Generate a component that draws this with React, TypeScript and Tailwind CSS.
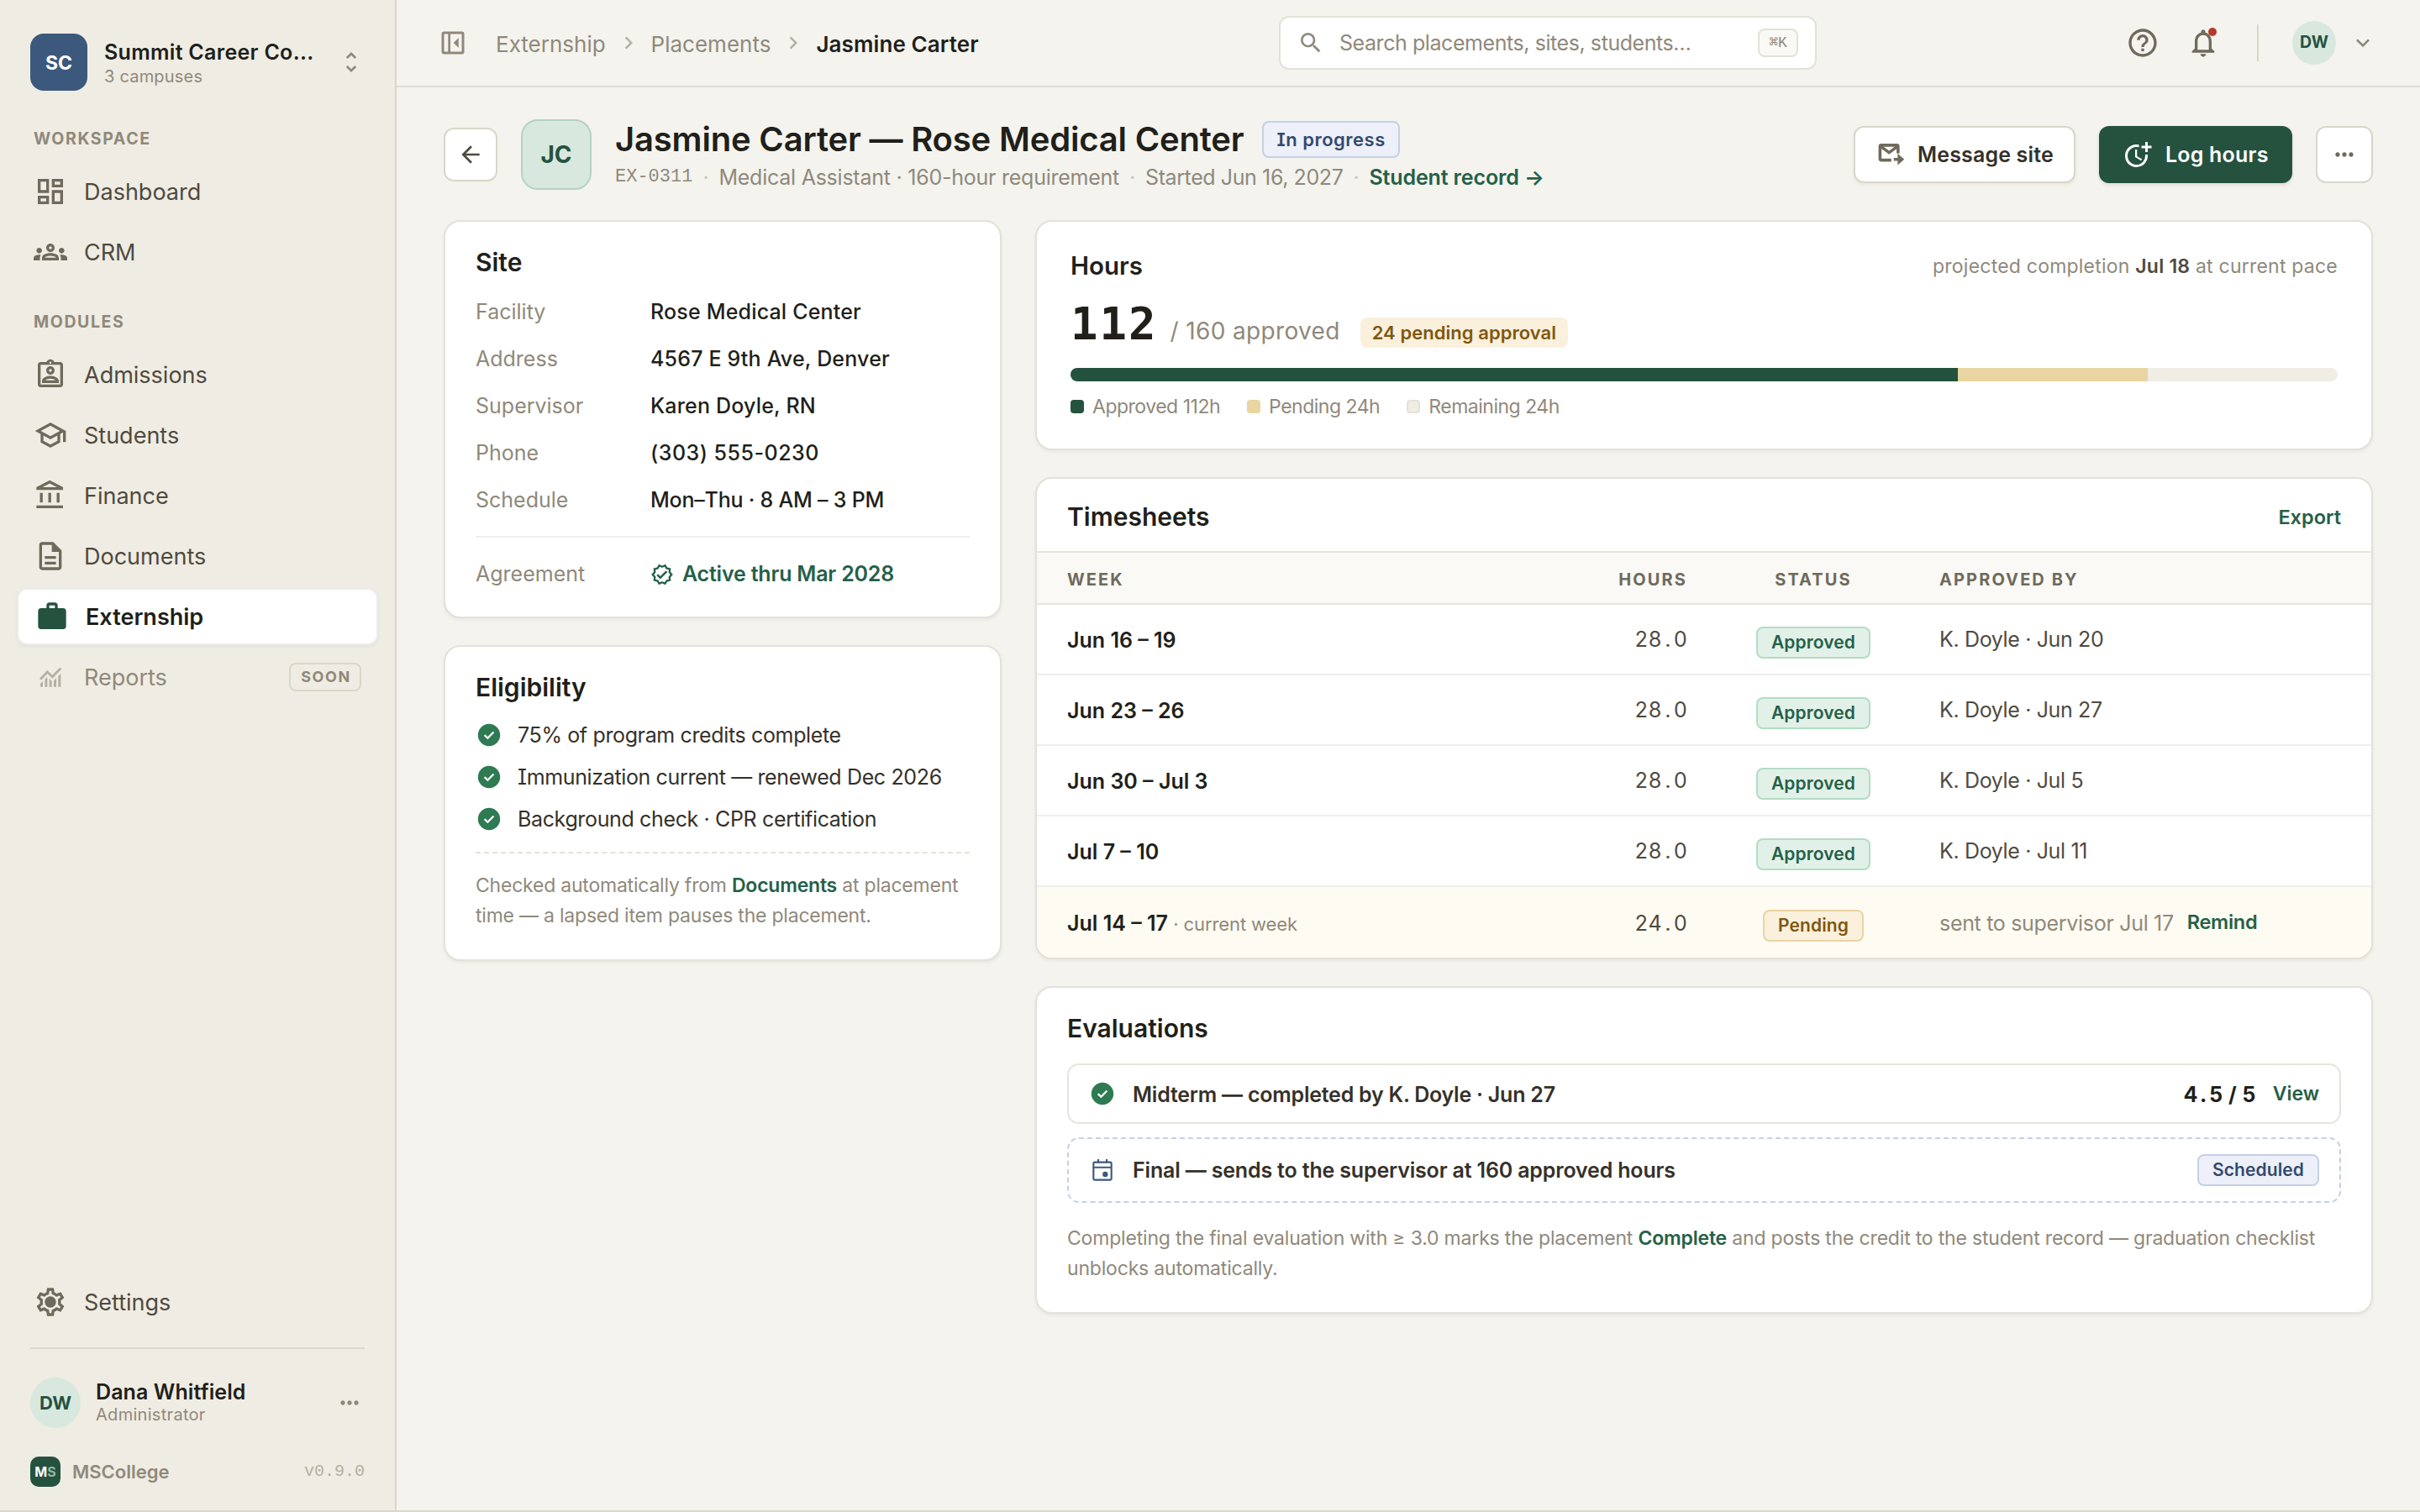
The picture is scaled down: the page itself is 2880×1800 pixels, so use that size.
import React from 'react';
import {
  MdOutlineDashboard,
  MdOutlineGroups,
  MdOutlineAssignmentInd,
  MdOutlineSchool,
  MdOutlineAccountBalance,
  MdOutlineDescription,
  MdWork,
  MdOutlineSettings,
  MdUnfoldMore,
  MdMoreHoriz,
  MdChevronRight,
  MdExpandMore,
  MdSearch,
  MdHelpOutline,
  MdNotificationsNone,
  MdArrowBack,
  MdMoreTime,
  MdOutlineVerified,
} from 'react-icons/md';

const MONO = "font-['Liberation_Mono',monospace]";

/* ICONS */
const CheckCircle = () => (
  <svg viewBox="0 0 24 24" className="size-8 shrink-0">
    <circle cx="12" cy="12" r="9.9" fill="#2e7a52" />
    <path d="M8 12.1l2.8 2.7 5.3-5.4" fill="none" stroke="#fff" strokeWidth="1.7" />
  </svg>
);

const ReportsIcon = () => (
  <svg viewBox="0 0 24 24" className="size-10" fill="currentColor">
    <path d="M4.8 13.6L9.8 8.4l3.6 3.5 6-6.2" fill="none" stroke="currentColor" strokeWidth="1.7" />
    <path d="M4.8 19v-2.2l1.8-1.9V19zM8 19v-5.4l1.8-1.7V19zM11.2 19v-6l1.8 1.8V19zM14.4 19v-4.4l1.8-1.8V19zM17.6 19v-7.6l1.8-1.8V19z" />
  </svg>
);

const PanelIcon = () => (
  <svg viewBox="0 0 24 24" className="size-9">
    <rect x="4" y="4" width="16" height="16" rx="1" fill="none" stroke="currentColor" strokeWidth="2" />
    <path d="M9.1 4v16" stroke="currentColor" strokeWidth="1.8" />
    <path d="M16.5 8v8l-4-4z" fill="currentColor" />
  </svg>
);

const MailOutIcon = () => (
  <svg viewBox="0 0 24 24" className="size-9" fill="none" stroke="currentColor" strokeWidth="2.4">
    <path d="M12.5 16.4H4.6a1 1 0 0 1-1-1V5.6a1 1 0 0 1 1-1h12.3a1 1 0 0 1 1 1v5.4" />
    <path d="M4 5.4l6.8 5 6.8-5" />
    <path d="M14.5 15.8h4" />
    <path d="M17.6 11.2l5.2 4.6-5.2 4.6z" fill="currentColor" stroke="none" />
  </svg>
);

const CalendarIcon = () => (
  <svg viewBox="0 0 24 24" className="size-8 shrink-0" fill="none" stroke="#3c587c" strokeWidth="1.6">
    <rect x="4" y="5" width="16" height="15.7" rx="1" />
    <path d="M4 9.6h16M8.2 2.3V5M15.8 2.3V5" />
    <circle cx="14.5" cy="15.8" r="2.4" fill="#3c587c" stroke="none" />
  </svg>
);

const SettingsIcon = () => (
  <span className="relative flex">
    <MdOutlineSettings className="size-10" />
    <span className="absolute left-3.5 top-3.5 size-3 rounded-full bg-current" />
  </span>
);

/* Tabular figure, the decimal point takes a full digit cell */
const Figure = ({ value }: { value: string }) => {
  const [whole, rest] = value.split('.');
  return (
    <span className="[font-feature-settings:'cv08','tnum']">
      {whole}
      <span className="px-[3.7px]">.</span>
      {rest}
    </span>
  );
};

/* SIDEBAR */
const NavItem = ({ icon, label, active, soon }: { icon: React.ReactNode; label: string; active?: boolean; soon?: boolean }) => (
  <div
    className={
      active
        ? 'flex h-[68px] items-center gap-5 rounded-xl border-2 border-[#ececea] bg-white pl-5 pr-5 font-semibold text-[#211f1a] shadow-[0_2px_4px_rgba(33,31,26,0.05)]'
        : 'flex h-[68px] items-center gap-5 pl-5 pr-5 ' + (soon ? 'text-[#8f897b]' : 'text-[#4f4a3f]')
    }
  >
    <span className={active ? 'text-[#25523f]' : soon ? 'text-[#b5b0a3]' : 'text-[#6f6a5c]'}>{icon}</span>
    <span className="text-[27px] leading-none">{label}</span>
    {soon && (
      <span className="ml-auto flex h-[34px] w-[86px] items-center justify-center rounded-lg border-2 border-[#d9d7c9] pl-0.5 text-[18px] font-bold leading-none tracking-[1.6px]">
        SOON
      </span>
    )}
  </div>
);

const Sidebar = () => (
  <aside className="flex w-[472px] shrink-0 flex-col border-r-2 border-[#d9d7c9] bg-[#efece3] pt-10 pb-7">
    <div className="flex h-[68px] items-center pl-9 pr-9">
      <div className="flex size-[68px] items-center justify-center rounded-2xl bg-[#3c587c] pt-[3px] text-[23px] font-bold text-white">SC</div>
      <div className="ml-5 flex flex-col pt-[3px]">
        <span className="text-[25px] font-semibold leading-[30px] tracking-[0.3px] text-[#211f1a]">Summit Career Co...</span>
        <span className="text-[20px] leading-7 tracking-[0.2px] text-[#8f897b]">3 campuses</span>
      </div>
      <MdUnfoldMore className="ml-auto size-8 text-[#8f897b]" />
    </div>

    <div className="mt-[45px] pl-10 text-[19.5px] font-bold leading-6 tracking-[1.6px] text-[#8f897b]">WORKSPACE</div>
    <nav className="mt-[17px] flex flex-col gap-1 px-5">
      <NavItem icon={<MdOutlineDashboard className="size-10" />} label="Dashboard" />
      <NavItem icon={<MdOutlineGroups className="size-10" />} label="CRM" />
    </nav>

    <div className="mt-[37px] pl-10 text-[19.5px] font-bold leading-6 tracking-[1.6px] text-[#8f897b]">MODULES</div>
    <nav className="mt-[17px] flex flex-col gap-1 px-5">
      <NavItem icon={<MdOutlineAssignmentInd className="size-10" />} label="Admissions" />
      <NavItem icon={<MdOutlineSchool className="size-10" />} label="Students" />
      <NavItem icon={<MdOutlineAccountBalance className="size-10" />} label="Finance" />
      <NavItem icon={<MdOutlineDescription className="size-10" />} label="Documents" />
      <NavItem icon={<MdWork className="size-10" />} label="Externship" active />
      <NavItem icon={<ReportsIcon />} label="Reports" soon />
    </nav>

    <div className="mt-auto px-5">
      <NavItem icon={<SettingsIcon />} label="Settings" />
    </div>
    <div className="mx-9 mt-5 border-t-2 border-[#dbd8cf]" />
    <div className="mx-9 mt-[34px] flex h-[60px] items-center">
      <div className="flex size-[60px] items-center justify-center rounded-full bg-[#d8e8de] text-[22px] font-bold text-[#25523f]">DW</div>
      <div className="ml-[18px] flex flex-col">
        <span className="text-[25px] font-semibold leading-[27px] tracking-[0.1px] text-[#211f1a]">Dana Whitfield</span>
        <span className="text-[20px] leading-[26px] tracking-[0.3px] text-[#8f897b]">Administrator</span>
      </div>
      <MdMoreHoriz className="ml-auto mr-0.5 size-8 text-[#8f897b]" />
    </div>
    <div className="mx-9 mt-[34px] flex h-9 items-center">
      <div className="flex size-9 items-center justify-center rounded-[10px] bg-[#25523f] text-[16px] font-bold text-white">
        M<span className="text-[#8fb8a2]">S</span>
      </div>
      <span className="ml-3.5 text-[22px] font-semibold text-[#8f897b]">MSCollege</span>
      <span className={'ml-auto text-[20px] text-[#b5b0a3] ' + MONO}>v0.9.0</span>
    </div>
  </aside>
);

/* TOP BAR */
const TopBar = () => (
  <header className="flex h-[104px] shrink-0 items-center border-b-2 border-[#dfddd6] pl-[49px] pr-[52px]">
    <div className="flex w-[1001px] items-center text-[26px] text-[#8f897b]">
      <PanelIcon />
      <span className="ml-[33px] pt-[3px]">Externship</span>
      <MdChevronRight className="mx-[12px] size-[30px] text-[#b5b0a3]" />
      <span className="pt-[3px]">Placements</span>
      <MdChevronRight className="mx-[12px] size-[30px] text-[#b5b0a3]" />
      <span className="pt-[3px] font-semibold tracking-[0.1px] text-[#211f1a]">Jasmine Carter</span>
    </div>
    <div className="flex h-16 w-[640px] items-center rounded-xl border-2 border-[#e3e2d8] bg-white pl-5 pr-5">
      <MdSearch className="size-8 text-[#8f897b]" />
      <span className="ml-[18px] pt-px text-[25px] tracking-[-0.43px] text-[#8f897b]">Search placements, sites, students…</span>
      <span className={'ml-auto flex h-[34px] w-12 items-center justify-center rounded-lg border-2 border-[#e3e2d8] bg-[#faf9f5] text-[18px] text-[#8f897b] ' + MONO}>⌘K</span>
    </div>
    <div className="ml-auto flex items-center text-[#6f6a5c]">
      <MdHelpOutline className="size-10" />
      <div className="relative ml-8">
        <MdNotificationsNone className="size-10" />
        <span className="absolute right-1 top-0.5 size-2.5 rounded-full bg-[#b5392c]" />
      </div>
      <div className="ml-11 h-11 border-l-2 border-[#d9d7c9]" />
      <div className="ml-10 flex size-[52px] items-center justify-center rounded-full bg-[#d8e8de] text-[19.5px] font-bold text-[#25523f]">DW</div>
      <MdExpandMore className="ml-4 size-8 text-[#8f897b]" />
    </div>
  </header>
);

/* PAGE HEADER */
const Dot = () => <span className="text-[#c9c5b8]">·</span>;

const PageHeader = () => (
  <div className="flex h-[84px] items-center">
    <button className="flex size-16 items-center justify-center rounded-xl border-2 border-[#d9d7c9] bg-white text-[#4f4a3f]">
      <MdArrowBack className="size-8" />
    </button>
    <div className="ml-7 flex size-[84px] items-center justify-center rounded-[20px] border-2 border-[#b5d3c5] bg-[#d8e8de] text-[28px] font-bold text-[#25523f]">JC</div>
    <div className="ml-7 flex flex-col">
      <div className="flex items-center">
        <h1 className="text-[40px] font-semibold leading-[48px] tracking-[-0.18px] text-[#211f1a]">Jasmine Carter — Rose Medical Center</h1>
        <span className="ml-[22px] flex h-11 items-center rounded-lg border-2 border-[#c3d1e6] bg-[#edf0f8] px-[15px] text-[22px] font-semibold tracking-[0.5px] text-[#34496e]">
          In progress
        </span>
      </div>
      <div className="flex h-9 items-center gap-3 pt-1.5 text-[25px] leading-9 tracking-[-0.24px] text-[#8f897b]">
        <span className={'text-[22px] tracking-normal ' + MONO}>EX-0311</span>
        <Dot />
        <span>Medical Assistant · 160-hour requirement</span>
        <Dot />
        <span className="tracking-[-0.4px]">Started Jun 16, 2027</span>
        <Dot />
        <span className="font-semibold tracking-[-0.12px] text-[#256048]">Student record →</span>
      </div>
    </div>
    <div className="ml-auto flex gap-7 text-[25px] font-semibold">
      <button className="flex h-[68px] w-[264px] items-center rounded-xl border-2 border-[#d9d7c9] bg-white pl-6 text-[#35312a] shadow-[0_2px_4px_rgba(33,31,26,0.06)]">
        <span className="text-[#6f6a5c]"><MailOutIcon /></span>
        <span className="ml-3.5 pt-0.5 tracking-[0.15px]">Message site</span>
      </button>
      <button className="flex h-[68px] w-[230px] items-center rounded-xl bg-[#25523f] pl-7 text-white shadow-[0_2px_4px_rgba(33,31,26,0.12)]">
        <MdMoreTime className="size-9" />
        <span className="ml-[15px] pt-0.5 tracking-[0.2px]">Log hours</span>
      </button>
      <button className="flex size-[68px] items-center justify-center rounded-xl border-2 border-[#d9d7c9] bg-white text-[#6f6a5c]">
        <MdMoreHoriz className="size-8" />
      </button>
    </div>
  </div>
);

/* CARDS */
const CARD = 'rounded-[20px] border-2 border-[#e3e2d8] bg-white shadow-[0_2px_4px_rgba(33,31,26,0.06)]';

const siteRows = [
  ['Facility', 'Rose Medical Center'],
  ['Address', '4567 E 9th Ave, Denver'],
  ['Supervisor', 'Karen Doyle, RN'],
  ['Phone', '(303) 555-0230'],
  ['Schedule', 'Mon–Thu · 8 AM – 3 PM'],
];

const SiteCard = () => (
  <section className={'h-[474px] px-9 pt-[30px] ' + CARD}>
    <h2 className="text-[30px] font-semibold leading-9 text-[#211f1a]">Site</h2>
    <dl className="mt-3.5 text-[25px]">
      {siteRows.map(([label, value]) => (
        <div key={label} className="flex h-14 items-center">
          <dt className="w-52 text-[#8f897b]">{label}</dt>
          <dd className={'font-medium text-[#211f1a] ' + (label === 'Phone' ? 'tracking-[0.5px]' : label === 'Schedule' ? 'tracking-[-0.22px]' : 'tracking-[0.18px]')}>{value}</dd>
        </div>
      ))}
    </dl>
    <div className="mt-3.5 flex h-[90px] items-center border-t-2 border-[#eeeeec] text-[25px]">
      <span className="w-52 text-[#8f897b]">Agreement</span>
      <span className="flex items-center gap-2.5 font-semibold tracking-[-0.2px] text-[#256048]">
        <MdOutlineVerified className="size-7" />
        Active thru Mar 2028
      </span>
    </div>
  </section>
);

const eligibility = ['75% of program credits complete', 'Immunization current — renewed Dec 2026', 'Background check · CPR certification'];

const EligibilityCard = () => (
  <section className={'h-[376px] px-9 pt-[30px] ' + CARD}>
    <h2 className="text-[30px] font-semibold leading-9 text-[#211f1a]">Eligibility</h2>
    <ul className="mt-3.5 text-[25px] tracking-[-0.36px] text-[#35312a]">
      {eligibility.map((item) => (
        <li key={item} className="flex h-[50px] items-center gap-[18px]">
          <CheckCircle />
          <span className="pt-px">{item}</span>
        </li>
      ))}
    </ul>
    <p className="mt-3.5 border-t-2 border-dashed border-[#e3e2d8] pt-5 text-[23px] leading-9 tracking-[-0.22px] text-[#8f897b]">
      Checked automatically from <span className="font-semibold text-[#256048]">Documents</span> at placement
      <br />
      time — a lapsed item pauses the placement.
    </p>
  </section>
);

const segments = [
  { label: 'Approved', hours: 112, color: 'bg-[#25523f]' },
  { label: 'Pending', hours: 24, color: 'bg-[#e9d5a1]' },
  { label: 'Remaining', hours: 24, color: 'bg-[#f0ede5]' },
];

const HoursCard = () => (
  <section className={'h-[274px] px-10 pt-[34px] ' + CARD}>
    <div className="flex h-9 items-center justify-between">
      <h2 className="text-[29.5px] font-semibold text-[#211f1a]">Hours</h2>
      <span className="pt-[3px] text-[23px] tracking-[0.22px] text-[#8f897b]">
        projected completion <span className="font-semibold text-[#4f4a3f]">Jul 18</span> at current pace
      </span>
    </div>
    <div className="mt-[18px] flex h-16 items-baseline">
      <span className="font-['DejaVu_Sans_Mono',monospace] text-[54px] font-bold leading-[68px] tracking-[2px] text-[#211f1a]">112</span>
      <span className="ml-[15px] text-[28px] tracking-[0.35px] text-[#8f897b]">/ 160 approved</span>
      <span className="ml-6 h-9 rounded-lg bg-[#faf0dc] px-3.5 text-[22px] font-semibold leading-9 tracking-[0.05px] text-[#7f5710]">24 pending approval</span>
    </div>
    <div className="mt-[22px] flex h-4 overflow-hidden rounded-lg">
      {segments.map((s) => (
        <div key={s.label} className={s.color} style={{ width: `${(s.hours / 160) * 100}%` }} />
      ))}
    </div>
    <div className="mt-3.5 flex h-8 items-center gap-8 text-[23px] tracking-[-0.49px] text-[#8f897b]">
      {segments.map((s) => (
        <span key={s.label} className="flex items-center gap-2.5">
          <span className={'size-4 rounded ' + s.color + (s.label === 'Remaining' ? ' border-2 border-[#e3e2d8]' : '')} />
          {s.label} {s.hours}h
        </span>
      ))}
    </div>
  </section>
);

const BADGE = 'inline-flex h-[38px] items-center rounded-lg border-2 px-4 text-[21px] font-semibold tracking-[0.1px] ';

const timesheets = [
  { week: 'Jun 16 – 19', hours: '28.0', by: 'K. Doyle · Jun 20' },
  { week: 'Jun 23 – 26', hours: '28.0', by: 'K. Doyle · Jun 27' },
  { week: 'Jun 30 – Jul 3', hours: '28.0', by: 'K. Doyle · Jul 5' },
  { week: 'Jul 7 – 10', hours: '28.0', by: 'K. Doyle · Jul 11' },
];

const GRID = 'grid grid-cols-[580px_158px_300px_1fr] items-center px-9 ';

const TimesheetsCard = () => (
  <section className={'h-[574px] overflow-hidden ' + CARD}>
    <div className="flex h-[86px] items-center justify-between px-9 pt-[5px]">
      <h2 className="text-[30px] font-semibold text-[#211f1a]">Timesheets</h2>
      <span className="pt-px text-[23.5px] font-semibold text-[#256048]">Export</span>
    </div>
    <div className={GRID + 'h-16 border-y-2 border-[#e6e5da] bg-[#faf9f5] pt-[3px] text-[20px] font-bold tracking-[2.1px] text-[#6f6a5c]'}>
      <span>WEEK</span>
      <span className="text-right">HOURS</span>
      <span className="text-center">STATUS</span>
      <span>APPROVED BY</span>
    </div>
    {timesheets.map((t) => (
      <div key={t.week} className={GRID + 'h-[84px] border-b-2 border-[#eeeeec] text-[25px] text-[#4f4a3f]'}>
        <span className="pt-1 font-semibold text-[#211f1a]">{t.week}</span>
        <span className="pt-px text-right">
          <Figure value={t.hours} />
        </span>
        <span className="flex justify-center pt-[7px]">
          <span className={BADGE + 'border-[#b3dcc5] bg-[#e2f1e8] text-[#256048]'}>Approved</span>
        </span>
        <span className="pt-px tracking-[-0.36px]">{t.by}</span>
      </div>
    ))}
    <div className={GRID + 'h-[84px] bg-[#fefbf2] text-[25px] text-[#4f4a3f]'}>
      <span className="pt-[3px] font-semibold text-[#211f1a]">
        Jul 14 – 17 <span className="text-[22px] font-normal tracking-[-0.1px] text-[#8f897b]">· current week</span>
      </span>
      <span className="pt-[3px] text-right">
        <Figure value="24.0" />
      </span>
      <span className="flex justify-center pt-[7px]">
        <span className={BADGE + 'border-[#e9d5a1] bg-[#faf0dc] text-[#7f5710]'}>Pending</span>
      </span>
      <span className="flex items-center gap-4 tracking-[-0.31px] text-[#8f897b]">
        <span className="pt-[3px]">sent to supervisor Jul 17</span>
        <span className="text-[23.5px] font-semibold text-[#256048]">Remind</span>
      </span>
    </div>
  </section>
);

const EvaluationsCard = () => (
  <section className={'h-[390px] px-9 pt-[30px] ' + CARD}>
    <h2 className="text-[30px] font-semibold leading-9 text-[#211f1a]">Evaluations</h2>
    <div className="mt-6 flex h-[72px] items-center rounded-[14px] border-2 border-[#e6e5da] px-6 text-[25px] font-semibold tracking-[-0.23px] text-[#35312a]">
      <CheckCircle />
      <span className="ml-5 pt-[3px]">Midterm — completed by K. Doyle · Jun 27</span>
      <span className="ml-auto pt-[3px] font-bold tracking-normal text-[#211f1a]">
        <Figure value="4.5 / 5" />
      </span>
      <span className="ml-5 text-[23px] tracking-normal text-[#256048]">View</span>
    </div>
    <div className="mt-4 flex h-[78px] items-center rounded-[14px] border-2 border-dashed border-[#c3d1e6] px-6 text-[25px] font-semibold tracking-[-0.17px] text-[#35312a]">
      <CalendarIcon />
      <span className="ml-5 pt-px">Final — sends to the supervisor at 160 approved hours</span>
      <span className={'ml-auto ' + BADGE + 'border-[#c3d1e6] bg-[#edf0f8] text-[#34496e]'}>Scheduled</span>
    </div>
    <p className="mt-6 text-[23px] leading-9 tracking-[-0.19px] text-[#8f897b]">
      Completing the final evaluation with ≥ 3.0 marks the placement <span className="font-semibold text-[#256048]">Complete</span> and posts the
      credit to the student record — graduation checklist
      <br />
      unblocks automatically.
    </p>
  </section>
);

export default function App() {
  return (
    <div className="flex h-[1800px] w-[2880px] overflow-hidden whitespace-nowrap border-b-2 border-[#d9d7c9] bg-[#f4f3ee] font-['Inter','Liberation_Sans',sans-serif] [font-feature-settings:'cv08']">
      <Sidebar />
      <div className="flex flex-1 flex-col">
        <TopBar />
        <main className="pl-14 pr-14 pt-[38px]">
          <PageHeader />
          <div className="mt-9 flex gap-10">
            <div className="flex w-[664px] flex-col gap-8">
              <SiteCard />
              <EligibilityCard />
            </div>
            <div className="flex flex-1 flex-col gap-8">
              <HoursCard />
              <TimesheetsCard />
              <EvaluationsCard />
            </div>
          </div>
        </main>
      </div>
    </div>
  );
}
